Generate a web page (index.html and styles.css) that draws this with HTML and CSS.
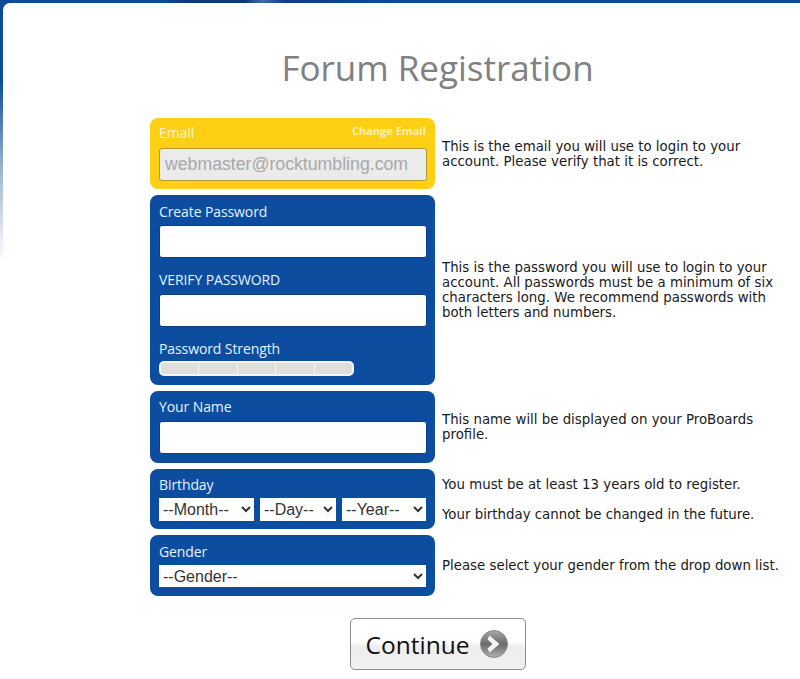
FILE: index.html
```html
<!DOCTYPE html>
<html lang="en">
<head>
<meta charset="utf-8">
<title>Forum Registration</title>
<link rel="stylesheet" href="styles.css">
</head>
<body>
<main class="card">
  <h1 class="title">Forum Registration</h1>
  <form class="form">
    <div class="row">
      <div class="panel panel-yellow">
        <div class="label-line">
          <label class="label">Email</label>
          <a class="change">Change Email</a>
        </div>
        <input class="field field-disabled" value="webmaster@rocktumbling.com" disabled>
      </div>
      <p class="help">This is the email you will use to login to your account. Please verify that it is correct.</p>
    </div>
    <div class="row">
      <div class="panel">
        <label class="label">Create Password</label>
        <input class="field" type="password">
        <label class="label label-next">VERIFY PASSWORD</label>
        <input class="field" type="password">
        <label class="label label-next label-tight">Password Strength</label>
        <div class="strength"><span></span><span></span><span></span><span></span><span></span></div>
      </div>
      <p class="help">This is the password you will use to login to your account. All passwords must be a minimum of six characters long. We recommend passwords with both letters and numbers.</p>
    </div>
    <div class="row">
      <div class="panel panel-name">
        <label class="label">Your Name</label>
        <input class="field">
      </div>
      <p class="help">This name will be displayed on your ProBoards profile.</p>
    </div>
    <div class="row">
      <div class="panel panel-birthday">
        <label class="label">Birthday</label>
        <div class="selects">
          <select class="select sel-month"><option>--Month--</option></select>
          <select class="select sel-day"><option>--Day--</option></select>
          <select class="select sel-year"><option>--Year--</option></select>
        </div>
      </div>
      <div class="help help-double">
        <p>You must be at least 13 years old to register.</p>
        <p>Your birthday cannot be changed in the future.</p>
      </div>
    </div>
    <div class="row">
      <div class="panel">
        <label class="label">Gender</label>
        <select class="select sel-full"><option>--Gender--</option></select>
      </div>
      <p class="help">Please select your gender from the drop down list.</p>
    </div>
    <div class="actions">
      <button class="continue" type="button">Continue
        <svg class="arrow" width="30" height="30" viewBox="0 0 30 30" aria-hidden="true">
          <defs>
            <linearGradient id="g" x1="0" y1="0" x2="0" y2="1">
              <stop offset="0" stop-color="#a8a8a8"/>
              <stop offset="0.5" stop-color="#6a6a6a"/>
              <stop offset="1" stop-color="#b0b0b0"/>
            </linearGradient>
          </defs>
          <circle cx="15" cy="15" r="13.5" fill="url(#g)" stroke="#8a8a8a"/>
          <path d="M10.5 6.5 L20.5 15 L10.5 23.5 L8.5 19.5 L13.5 15 L8.5 10.5 Z" fill="#f4f4f4"/>
        </svg>
      </button>
    </div>
  </form>
</main>
</body>
</html>
```
FILE: styles.css
```css
* { box-sizing: border-box; }
html, body { height: 100%; }
body {
  margin: 0;
  overflow: hidden;
  padding: 3px 0 0 3px;
  background:
    linear-gradient(to right, #0d4b97 160px, #0a3a7c 185px, #0a3a7c 245px, #3d6ea8 262px, #0a3f85 285px, #0d4b97 400px) top / 100% 3px no-repeat,
    linear-gradient(to bottom, #0d4b97 0, #0d4b97 80px, #9db6d2 170px, #ffffff 262px);
}
.card {
  background: #fff;
  border-radius: 7px 0 0 0;
  height: 100%;
  padding: 40px 0 0 147px;
}
.title {
  margin: 0 0 25px;
  width: 575px;
  text-align: center;
  font: 400 35px/50px "Open Sans", "DejaVu Sans", sans-serif;
  color: #808080;
}
.form { display: flex; flex-direction: column; gap: 6px; }
.row { display: flex; align-items: center; gap: 7px; }
.panel {
  width: 285px;
  flex: none;
  background: #0c4da0;
  border-radius: 8px;
  padding: 7px 9px 9px;
  display: flex;
  flex-direction: column;
}
.panel-yellow { background: #fecf13; height: 71px; padding-top: 5px; padding-bottom: 8px; }
.panel-name { padding-top: 6px; }
.panel-name .label { margin-bottom: 4px; }
.panel-birthday { padding-top: 6px; padding-bottom: 8px; }
.label {
  font: 500 14px/20px "Open Sans", "DejaVu Sans", sans-serif;
  letter-spacing: -0.1px;
  color: #e6f2ff;
  display: block;
  height: 20px;
  margin-bottom: 3px;
}
.label-next { margin-top: 12px; margin-bottom: 4px; }
.label-tight { margin-bottom: 2px; }
.label-line { display: flex; justify-content: space-between; height: 25px; }
.panel-yellow .label { color: #fff6cf; margin: 0; }
.change {
  font: 700 11px/14px "Open Sans", "DejaVu Sans", sans-serif;
  color: #fff1b8;
  padding-top: 1px;
}
.field {
  display: block;
  width: 268px;
  height: 33px;
  margin: 0;
  background: #fff;
  border: 1px solid #0a3f85;
  border-radius: 3px;
  padding: 0 5px;
  font: 17.7px "Liberation Sans", sans-serif;
}
.field-disabled {
  background: #ebebeb;
  border-color: #b39a2e;
  color: #a8a8a8;
  -webkit-text-fill-color: #a8a8a8;
  opacity: 1;
}
.strength {
  width: 195px;
  height: 15px;
  background: #f4f4f4;
  border-radius: 5px;
  padding: 2px;
  display: flex;
  gap: 1px;
}
.strength span { flex: 1; background: #dedede; }
.strength span:first-child { border-radius: 3px 0 0 3px; }
.strength span:last-child { border-radius: 0 3px 3px 0; }
.selects { display: flex; gap: 6px; }
.select {
  height: 23px;
  font: 16px "Liberation Sans", sans-serif;
  color: #333;
  background: #fff;
  border: 0;
  border-radius: 0;
  padding: 0;
  margin: 0;
}
.sel-month { width: 95px; }
.sel-day { width: 76px; }
.sel-year { width: 84px; }
.sel-full { width: 267px; height: 22px; display: block; }
.help {
  margin: 0;
  width: 345px;
  font: 13.33px/15px "DejaVu Sans", Verdana, sans-serif;
  color: #1a1a1a;
}
.help-double p { margin: 0 0 15px; }
.help-double p:last-child { margin-bottom: 0; }
.actions { width: 575px; display: flex; justify-content: center; margin-top: 16px; }
.continue {
  width: 176px;
  height: 52px;
  border: 1px solid #8c8c8c;
  border-radius: 5px;
  background: linear-gradient(to bottom, #ffffff 0, #ffffff 45%, #eeeeee 55%, #f0f0f0 100%);
  font: 24.5px "Open Sans", "DejaVu Sans", sans-serif;
  color: #111;
  display: flex;
  align-items: center;
  justify-content: center;
  gap: 10px;
  padding: 0;
}
.arrow { flex: none; }
```
